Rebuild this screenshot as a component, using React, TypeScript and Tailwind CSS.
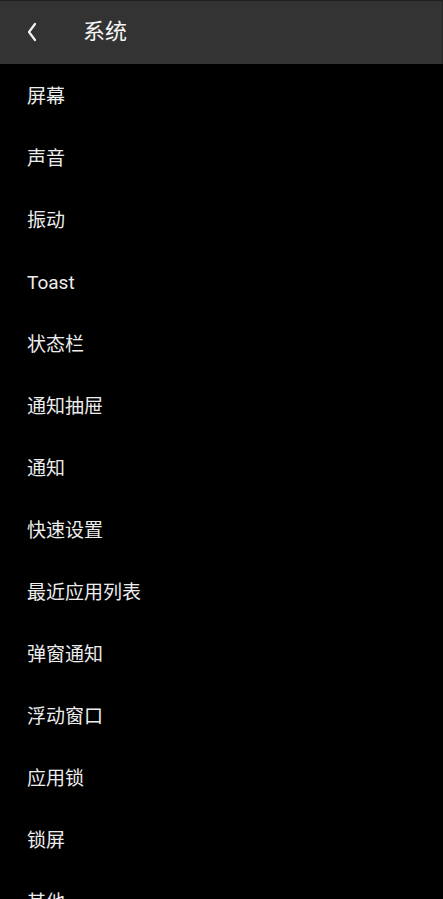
import React from "react";

const items = [
  "屏幕",
  "声音",
  "振动",
  "Toast",
  "状态栏",
  "通知抽屉",
  "通知",
  "快速设置",
  "最近应用列表",
  "弹窗通知",
  "浮动窗口",
  "应用锁",
  "锁屏",
  "其他",
];

export default function App() {
  return (
    <div
      className="w-[443px] h-[899px] overflow-hidden bg-black"
      style={{ fontFamily: 'Roboto, "Noto Sans CJK SC", sans-serif' }}
    >
      <div className="h-[64px] bg-[#333333] border-t border-[#1e1e1e] border-r border-r-[#262626] flex items-center">
        <div className="w-[27px]" />
        <svg width="10" height="20" viewBox="0 0 10 20" className="shrink-0 -mt-[1px]">
          <path d="M8 2 L2 10 L8 18" fill="none" stroke="#f2f2f2" strokeWidth="2.2" strokeLinecap="round" strokeLinejoin="round" />
        </svg>
        <div className="ml-[46px] -mt-[1px] text-[22px] text-[#f5f5f5] leading-none">系统</div>
      </div>
      <div className="flex flex-col pt-[1px]">
        {items.map((t) => (
          <div key={t} className="h-[62px] flex items-center pl-[27px] text-[19px] text-[#ededed] leading-none shrink-0">
            {t}
          </div>
        ))}
      </div>
    </div>
  );
}
